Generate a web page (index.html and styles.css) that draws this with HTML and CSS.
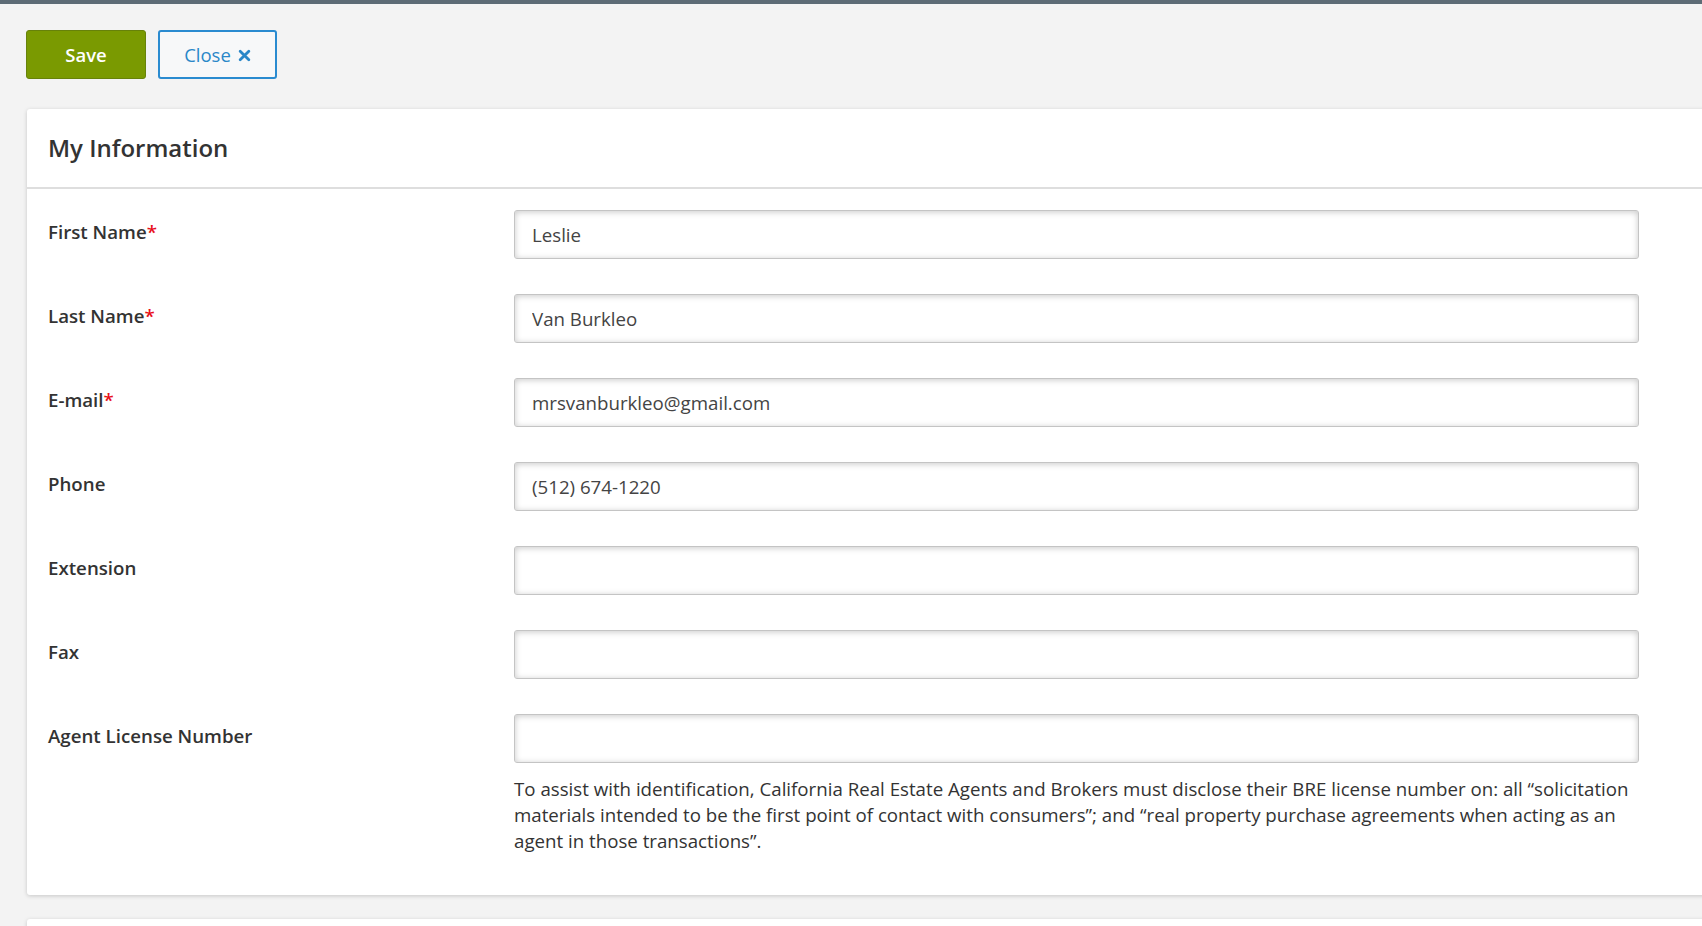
FILE: index.html
```html
<!DOCTYPE html>
<html lang="en">
<head>
<meta charset="utf-8">
<title>My Information</title>
<link rel="stylesheet" href="styles.css">
</head>
<body>
<div class="topbar"></div>
<div class="toolbar">
  <button class="btn btn-save" type="button">Save</button>
  <button class="btn btn-close" type="button">Close
    <svg class="x-icon" viewBox="0 0 12 12" width="13" height="13" aria-hidden="true"><path d="M2 2 L10 10 M10 2 L2 10" stroke="currentColor" stroke-width="2.6" stroke-linecap="round" fill="none"/></svg>
  </button>
</div>
<section class="card">
  <header class="card-header"><h2 class="card-title">My Information</h2></header>
  <div class="form">
    <label class="label">First Name<span class="req">*</span></label>
    <div class="field"><input class="input" type="text" value="Leslie"></div>

    <label class="label">Last Name<span class="req">*</span></label>
    <div class="field"><input class="input" type="text" value="Van Burkleo"></div>

    <label class="label">E-mail<span class="req">*</span></label>
    <div class="field"><input class="input" type="text" value="mrsvanburkleo@gmail.com"></div>

    <label class="label">Phone</label>
    <div class="field"><input class="input" type="text" value="(512) 674-1220"></div>

    <label class="label">Extension</label>
    <div class="field"><input class="input" type="text" value=""></div>

    <label class="label">Fax</label>
    <div class="field"><input class="input" type="text" value=""></div>

    <label class="label">Agent License Number</label>
    <div class="field">
      <input class="input" type="text" value="">
      <p class="help">To assist with identification, California Real Estate Agents and Brokers must disclose their BRE license number on: all “solicitation materials intended to be the first point of contact with consumers”; and “real property purchase agreements when acting as an agent in those transactions”.</p>
    </div>
  </div>
</section>
<section class="card card-next"></section>
</body>
</html>
```

FILE: styles.css
```css
html, body {
  margin: 0;
  padding: 0;
}
body {
  background: #f3f3f3;
  font-family: "Open Sans", "Liberation Sans", sans-serif;
  color: #333;
  overflow: hidden;
  width: 1702px;
  height: 926px;
}
.topbar {
  height: 4px;
  background: #5d6b75;
}
.toolbar {
  display: flex;
  gap: 12px;
  padding: 26px 0 0 26px;
}
.btn {
  height: 49px;
  width: 120px;
  border-radius: 3px;
  font-family: "Open Sans", "Liberation Sans", sans-serif;
  font-size: 18.5px;
  font-weight: 600;
  display: flex;
  align-items: center;
  justify-content: center;
  gap: 7px;
  padding: 0;
  cursor: pointer;
}
.btn-save {
  background: #7a9a01;
  border: 1px solid #67820a;
  color: #fff;
}
.btn-close {
  width: 119px;
  background: #f7f8f9;
  border: 2px solid #2a8bd0;
  color: #2a87c8;
  font-weight: 400;
}
.x-icon {
  display: block;
  margin-top: 1px;
}
.card {
  margin: 30px 0 0 27px;
  width: 1760px;
  background: #fff;
  border-radius: 3px;
  box-shadow: 0 1px 4px rgba(0, 0, 0, 0.18);
}
.card-header {
  height: 78px;
  border-bottom: 2px solid #dedede;
  display: flex;
  align-items: center;
  padding-left: 21px;
}
.card-title {
  margin: 0;
  font-size: 24px;
  font-weight: 600;
  color: #333;
  padding-bottom: 2px;
}
.form {
  display: grid;
  grid-template-columns: 466px 1125px;
  row-gap: 35px;
  padding: 21px 0 41px 21px;
}
.label {
  font-size: 18.7px;
  font-weight: 600;
  color: #333;
  padding-top: 10px;
  line-height: 24px;
}
.req {
  color: #e8101a;
}
.input {
  display: block;
  box-sizing: border-box;
  width: 1125px;
  height: 49px;
  border: 1px solid #c4c4c4;
  border-radius: 3px;
  box-shadow: inset 0 1px 6px rgba(0, 0, 0, 0.22);
  padding: 0 17px;
  font-family: "Open Sans", "Liberation Sans", sans-serif;
  font-size: 18.7px;
  color: #444;
  background: #fff;
  outline: none;
}
.help {
  margin: 13px 0 0;
  font-size: 18.7px;
  line-height: 26px;
  color: #333;
}
.card-next {
  margin-top: 24px;
  height: 40px;
}
```
